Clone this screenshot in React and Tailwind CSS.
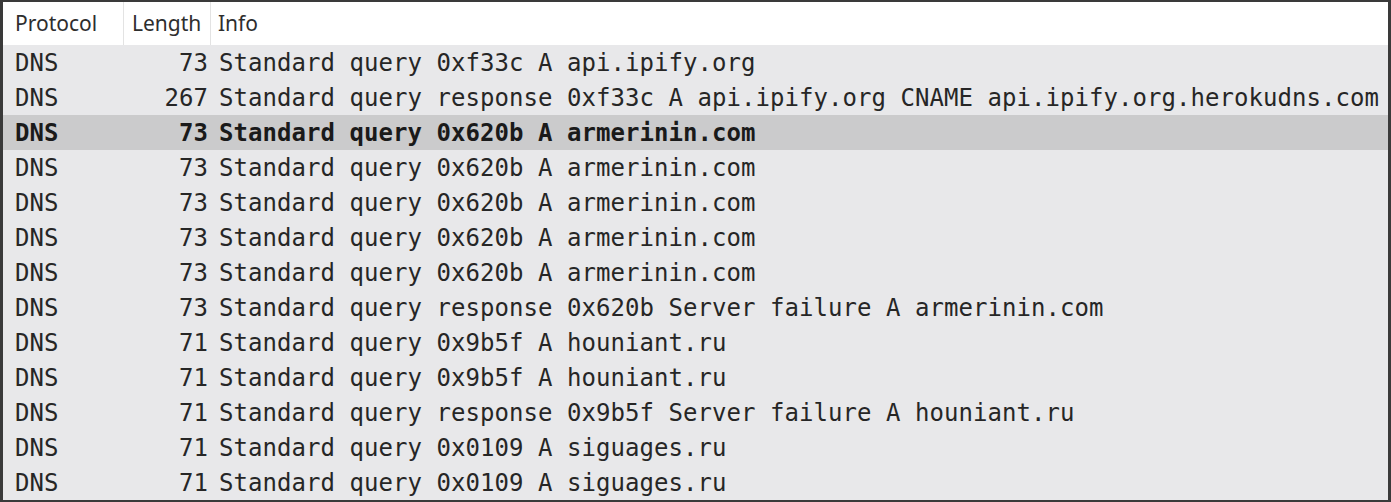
import React from "react";

const rows = [
  { proto: "DNS", len: 73, info: "Standard query 0xf33c A api.ipify.org" },
  { proto: "DNS", len: 267, info: "Standard query response 0xf33c A api.ipify.org CNAME api.ipify.org.herokudns.com" },
  { proto: "DNS", len: 73, info: "Standard query 0x620b A armerinin.com", selected: true },
  { proto: "DNS", len: 73, info: "Standard query 0x620b A armerinin.com" },
  { proto: "DNS", len: 73, info: "Standard query 0x620b A armerinin.com" },
  { proto: "DNS", len: 73, info: "Standard query 0x620b A armerinin.com" },
  { proto: "DNS", len: 73, info: "Standard query 0x620b A armerinin.com" },
  { proto: "DNS", len: 73, info: "Standard query response 0x620b Server failure A armerinin.com" },
  { proto: "DNS", len: 71, info: "Standard query 0x9b5f A houniant.ru" },
  { proto: "DNS", len: 71, info: "Standard query 0x9b5f A houniant.ru" },
  { proto: "DNS", len: 71, info: "Standard query response 0x9b5f Server failure A houniant.ru" },
  { proto: "DNS", len: 71, info: "Standard query 0x0109 A siguages.ru" },
  { proto: "DNS", len: 71, info: "Standard query 0x0109 A siguages.ru" },
];

export default function App() {
  return (
    <div className="w-[1391px] h-[502px] overflow-hidden bg-[#3a3a3a] pt-[2px] pb-[2px] pl-[3px] pr-[3px]">
      <div className="h-full overflow-hidden bg-[#e8e8ea] text-[#262626]">
        {/* Header */}
        <div
          className="flex h-[43px] items-center bg-white text-[21px] text-[#2e2e2e]"
          style={{ fontFamily: '"Noto Sans", "Open Sans", sans-serif' }}
        >
          <div className="w-[121px] h-full flex items-center pl-[12px] border-r border-[#e3e3e3]">Protocol</div>
          <div className="w-[87px] h-full flex items-center pl-[8px] border-r border-[#e3e3e3]">Length</div>
          <div className="flex-1 h-full flex items-center pl-[7px]">Info</div>
        </div>

        {/* Rows */}
        <div
          className="text-[24px] tracking-[0.05px]"
          style={{ fontFamily: '"DejaVu Sans Mono", "Liberation Mono", monospace' }}
        >
          {rows.map((r, i) => (
            <div
              key={i}
              className={`flex h-[35px] items-center whitespace-nowrap ${
                r.selected ? "bg-[#cbcbcc] font-bold text-[#1a1a1a]" : ""
              }`}
            >
              <div className="w-[121px] pl-[12px]">{r.proto}</div>
              <div className="w-[87px] pr-[3px] text-right">{r.len}</div>
              <div className="flex-1 pl-[8px]">{r.info}</div>
            </div>
          ))}
        </div>
      </div>
    </div>
  );
}
